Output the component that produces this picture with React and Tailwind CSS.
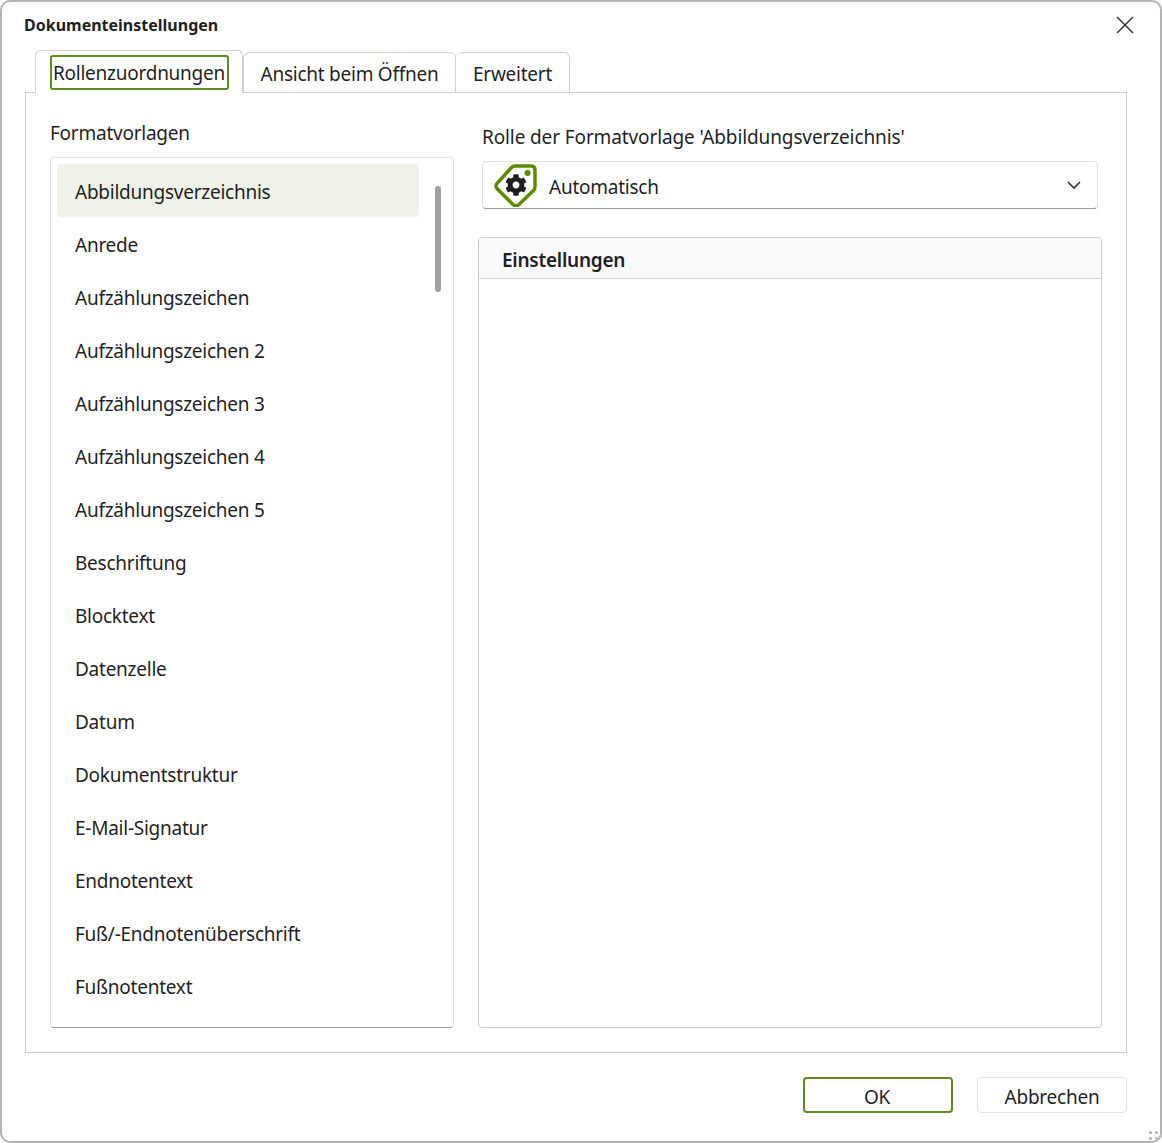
import { FaCog } from "react-icons/fa";

const styles = [
    "Abbildungsverzeichnis",
    "Anrede",
    "Aufzählungszeichen",
    "Aufzählungszeichen 2",
    "Aufzählungszeichen 3",
    "Aufzählungszeichen 4",
    "Aufzählungszeichen 5",
    "Beschriftung",
    "Blocktext",
    "Datenzelle",
    "Datum",
    "Dokumentstruktur",
    "E-Mail-Signatur",
    "Endnotentext",
    "Fuß/-Endnotenüberschrift",
    "Fußnotentext",
];

function TagIcon() {
    return (
        <div className="relative w-[44px] h-[44px] shrink-0">
            <svg viewBox="0 0 44 44" className="w-[44px] h-[44px]" fill="none">
                <path
                    d="M4 20.5 L18.5 4.5 Q20 3 22 3 L38 3 Q42 3 42 7 L42 24 Q42 26 40.5 27.5 L26 41.5 Q23 44 20 41.5 L4 25.5 Q2 23 4 20.5 Z"
                    stroke="#5f8a00"
                    strokeWidth="3.5"
                />
                <circle cx="34.5" cy="10" r="3" fill="#5f8a00" />
            </svg>
            <FaCog className="absolute left-[12px] top-[11px] text-[22px] text-[#1f1f1f]" />
        </div>
    );
}

function App() {
    return (
        <div
            className="w-[1162px] h-[1143px] bg-white border-2 border-[#b4b4b4] rounded-[10px] flex flex-col text-[#1f1f1f] text-[19px] tracking-[-0.25px] relative overflow-hidden"
            style={{ fontFamily: '"Noto Sans", sans-serif' }}
        >
            {/* TITLE */}
            <div className="h-[48px] pl-[22px] pr-[26px] pb-[2px] flex items-center justify-between">
                <span className="text-[16px] font-bold tracking-normal">Dokumenteinstellungen</span>
                <svg width="18" height="18" viewBox="0 0 18 18" stroke="#333" strokeWidth="1.5">
                    <path d="M1 1 L17 17 M17 1 L1 17" />
                </svg>
            </div>

            {/* TABS */}
            <div className="h-[43px] pl-[33px] flex items-end -mb-px relative z-10">
                <div className="w-[208px] h-[43px] border border-b-0 border-[#d0d0d0] rounded-t-[6px] bg-white flex items-center justify-center">
                    <span className="w-[179px] h-[35px] border-2 border-[#5f8a1f] rounded-[3px] pt-[2px] flex items-center justify-center leading-none">
                        Rollenzuordnungen
                    </span>
                </div>
                <div className="w-[213px] h-[41px] border border-[#d0d0d0] rounded-t-[6px] flex items-center justify-center pt-[4px]">
                    Ansicht beim Öffnen
                </div>
                <div className="w-[114px] h-[41px] border border-l-0 border-[#d0d0d0] rounded-t-[6px] flex items-center justify-center pt-[4px]">
                    Erweitert
                </div>
            </div>

            {/* PANEL */}
            <div className="ml-[23px] w-[1102px] h-[961px] border border-[#cccccc] p-[24px] flex gap-[24px]">
                <div className="w-[404px] flex flex-col">
                    <div className="h-[40px] leading-[32px]">Formatvorlagen</div>
                    <div className="relative flex-1 border border-[#e2e2e2] border-b-[#9a9a9a] rounded-[4px] p-[6px]">
                        {styles.map((s, i) => (
                            <div
                                key={s}
                                className={
                                    "w-[362px] h-[53px] pl-[18px] pt-[4px] flex items-center rounded-[4px] " +
                                    (i === 0 ? "bg-[#eff2e8]" : "")
                                }
                            >
                                {s}
                            </div>
                        ))}
                        <div className="absolute left-[384px] top-[28px] w-[6px] h-[106px] rounded-full bg-[#a0a0a0]" />
                    </div>
                </div>

                <div className="w-[624px] flex flex-col">
                    <div className="pl-[4px] h-[44px] pt-[4px] leading-[32px] tracking-[-0.12px]">
                        Rolle der Formatvorlage 'Abbildungsverzeichnis'
                    </div>
                    <div className="mx-[4px] h-[48px] border border-[#e2e2e2] border-b-[#9a9a9a] rounded-[4px] pl-[10px] pr-[15px] flex items-center">
                        <TagIcon />
                        <span className="ml-[12px] flex-1 pt-[4px]">Automatisch</span>
                        <svg width="16" height="10" viewBox="0 0 16 10" fill="none" stroke="#333" strokeWidth="1.6">
                            <path d="M2 2 L8 8 L14 2" />
                        </svg>
                    </div>
                    <div className="mt-[28px] flex-1 border border-[#cccccc] rounded-[4px] overflow-hidden">
                        <div className="h-[41px] bg-[#f9f9f9] border-b border-[#d4d4d4] pl-[23px] pt-[5px] flex items-center font-semibold">
                            Einstellungen
                        </div>
                    </div>
                </div>
            </div>

            {/* BUTTONS */}
            <div className="flex justify-end gap-[24px] mt-[24px] pr-[33px]">
                <button className="w-[150px] h-[36px] border-2 border-[#5f8a1f] rounded-[4px] leading-none pt-[5px] pr-[2px]">
                    OK
                </button>
                <button className="w-[150px] h-[36px] border border-[#e2e2e2] rounded-[4px] leading-none pt-[5px]">
                    Abbrechen
                </button>
            </div>

            {/* RESIZE GRIP */}
            <div className="absolute right-[2px] bottom-[1px] grid grid-cols-2 gap-[3px]">
                <span className="w-[3px] h-[3px] bg-[#b0b0b0] rounded-full" />
                <span className="w-[3px] h-[3px] bg-[#b0b0b0] rounded-full" />
                <span className="w-[3px] h-[3px] bg-[#b0b0b0] rounded-full" />
                <span className="w-[3px] h-[3px] bg-[#b0b0b0] rounded-full" />
            </div>
        </div>
    );
}

export default App;
